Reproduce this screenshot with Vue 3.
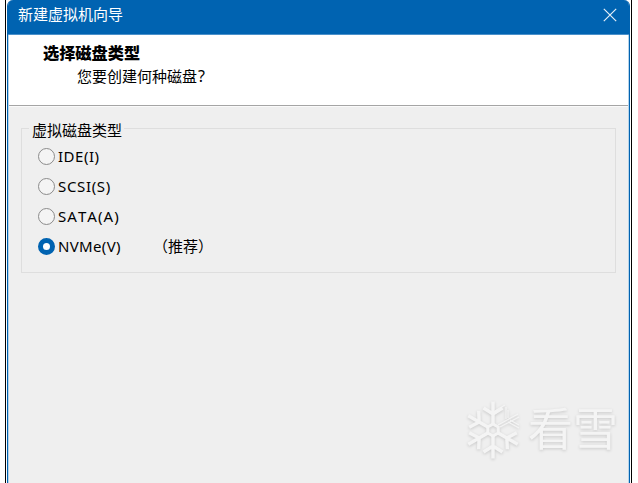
<template>
  <div class="screen">
    <div class="frame">
      <div class="window">
        <header class="titlebar">
          <span class="title">新建虚拟机向导</span>
          <button class="close" aria-label="关闭">
            <svg width="14" height="14" viewBox="0 0 14 14" fill="none" stroke="currentColor" stroke-width="1.2">
              <path d="M.8 .8 13.2 13.2M13.2 .8 .8 13.2" />
            </svg>
          </button>
        </header>

        <div class="heading">
          <h1>选择磁盘类型</h1>
          <p>您要创建何种磁盘<span class="q">?</span></p>
        </div>

        <main class="content">
          <div class="group">
            <div class="legend">虚拟磁盘类型</div>
            <label v-for="d in disks" :key="d.name" class="option">
              <input type="radio" name="disk" :value="d.name" v-model="selected" />
              <span class="name" :style="{ letterSpacing: d.spacing + 'px' }">{{ d.name }}</span>
              <span v-if="d.note" class="note">{{ d.note }}</span>
            </label>
          </div>
        </main>

        <div class="watermark">
          <svg class="flake" width="54" height="60" viewBox="-27 -30 54 60" fill="none" stroke="#f4f4f4">
            <path stroke-width="3" d="M0-6 5.2-3 5.2 3 0 6-5.2 3-5.2-3Z" />
            <g v-for="a in [0, 120, 180, 240, 300]" :key="a" :transform="`rotate(${a})`" stroke-width="3.4">
              <path d="M0-6V-28.5M-9.5-22 0-16 9.5-22" />
            </g>
            <!-- upper right arm is split into thin lines -->
            <path stroke-width="1.2" d="M5-5 25-16M7-3 26-13M2-19 12-25M13-23V-11M15-20V-12M15-8 26-2M17-10 26-5" />
          </svg>
          <span class="brand">看雪</span>
        </div>
      </div>
    </div>
  </div>
</template>

<script setup>
import { ref } from 'vue'

const selected = ref('NVMe(V)')

const disks = [
  { name: 'IDE(I)', spacing: 0.5 },
  { name: 'SCSI(S)', spacing: 0.65 },
  { name: 'SATA(A)', spacing: 1.05 },
  { name: 'NVMe(V)', spacing: 0.35, note: '（推荐）' }
]
</script>

<style>
body {
  margin: 0;
  background: #fff;
  overflow: hidden;
}
</style>

<style scoped>
.screen {
  box-sizing: border-box;
  width: 638px;
  height: 483px;
  padding: 0 6px 0 5px;
  font: 15px/20px "Noto Sans", "Noto Sans CJK SC", sans-serif;
  color: #000;
  overflow: hidden;
}

.frame {
  box-sizing: border-box;
  height: 483px;
  padding: 0 1px;
  border: solid #000;
  border-width: 0 1px;
}

.window {
  position: relative;
  box-sizing: border-box;
  height: 483px;
  border: solid #0063b1;
  border-width: 0 1px;
  border-radius: 6px 6px 0 0;
  background: #efefef;
  box-shadow: inset 1px 0 #b5d3ea, inset -1px 0 #b5d3ea;
  overflow: hidden;
}

.titlebar {
  box-sizing: border-box;
  height: 35px;
  padding: 0 12px 5px 10px;
  display: flex;
  align-items: center;
  justify-content: space-between;
  background: #0063b1;
  border-bottom: 1px solid #4a90ca;
  color: #fff;
}

.title {
  font-family: "Noto Sans CJK SC", sans-serif;
  font-weight: 400;
  margin-top: -1px;
}

.close {
  display: flex;
  padding: 0;
  border: 0;
  background: none;
  color: #e4eff8;
}

.heading {
  box-sizing: border-box;
  height: 71px;
  margin: 0 1px;
  padding: 7px 0 0 34px;
  background: #fff;
  border-bottom: 1px solid #a5a5a5;
  box-shadow: 0 1px #fafafa;
  font-family: "Noto Sans CJK SC", sans-serif;
}

.heading h1 {
  margin: 0;
  font-size: 16.2px;
  font-weight: 900;
  line-height: 21px;
}

.heading p {
  margin: 2px 0 0 34px;
  line-height: 21px;
}

.q {
  margin-left: 1px;
  font-family: "Noto Sans", sans-serif;
  font-size: 16px;
}

.content {
  padding: 22px 13px 0;
}

.group {
  box-sizing: border-box;
  height: 145px;
  border: 1px solid #dedede;
  padding-left: 16px;
}

.legend {
  width: 92px;
  height: 20px;
  margin: -9px 0 1px -9px;
  padding-left: 3px;
  background: #efefef;
  font-family: "Noto Sans CJK SC", sans-serif;
}

.option {
  display: flex;
  align-items: center;
  height: 30px;
}

.option input {
  appearance: none;
  box-sizing: border-box;
  width: 17px;
  height: 17px;
  margin: 0 3px 0 0;
  border: 1.4px solid #8b8b8b;
  border-radius: 50%;
  background: #f4f4f4;
}

.option input:checked {
  border: 5px solid #0063b1;
  background: #fff;
}

.name {
  width: 95px;
  font-kerning: none;
  white-space: nowrap;
}

.note {
  font-family: "Noto Sans CJK SC", sans-serif;
}

/* brand mark floating over the dialog */
.watermark {
  position: absolute;
  left: 458px;
  top: 400px;
  display: flex;
  align-items: center;
  filter: drop-shadow(0 1px 1.5px rgba(0, 0, 0, 0.16));
}

.brand {
  margin: -7px 0 0 8px;
  font: 400 45px/60px "Noto Sans CJK SC", sans-serif;
  color: #f4f4f4;
}
</style>
